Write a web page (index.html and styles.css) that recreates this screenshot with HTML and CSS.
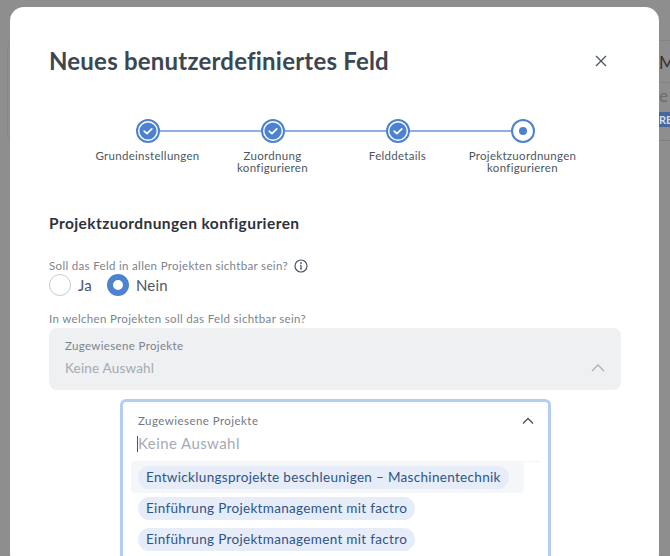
FILE: index.html
```html
<!DOCTYPE html>
<html lang="de">
<head>
<meta charset="utf-8">
<title>Neues benutzerdefiniertes Feld</title>
<link rel="stylesheet" href="styles.css">
</head>
<body>
<div class="page-behind">
  <div class="behind-card-left"></div>
  <div class="behind-right">
    <div class="behind-row behind-m">M</div>
    <div class="behind-row behind-e">e<span class="behind-tag">RE</span></div>
  </div>
</div>
<div class="modal">
  <header class="modal-head">
    <h1 class="modal-title">Neues benutzerdefiniertes Feld</h1>
    <svg class="close" viewBox="0 0 12 12" width="12" height="12"><path d="M1 1l10 10M11 1L1 11"/></svg>
  </header>
  <ol class="stepper">
    <li class="step done">
      <span class="dot"><svg viewBox="0 0 24 24" width="24" height="24"><circle cx="12" cy="12" r="8.6"/><path d="M8.2 12.2l2.7 2.5 4.9-4.9"/></svg></span>
      <span class="step-label">Grundeinstellungen</span>
    </li>
    <li class="step done">
      <span class="dot"><svg viewBox="0 0 24 24" width="24" height="24"><circle cx="12" cy="12" r="8.6"/><path d="M8.2 12.2l2.7 2.5 4.9-4.9"/></svg></span>
      <span class="step-label">Zuordnung<br>konfigurieren</span>
    </li>
    <li class="step done">
      <span class="dot"><svg viewBox="0 0 24 24" width="24" height="24"><circle cx="12" cy="12" r="8.6"/><path d="M8.2 12.2l2.7 2.5 4.9-4.9"/></svg></span>
      <span class="step-label">Felddetails</span>
    </li>
    <li class="step current">
      <span class="dot"><span class="dot-inner"></span></span>
      <span class="step-label">Projektzuordnungen<br>konfigurieren</span>
    </li>
  </ol>
  <h2 class="section-title">Projektzuordnungen konfigurieren</h2>
  <div class="question">
    <span>Soll das Feld in allen Projekten sichtbar sein?</span>
    <svg class="info" viewBox="0 0 14 14" width="14" height="14"><circle cx="7" cy="7" r="6"/><path d="M7 6.3v3.6M6 10h2M6.1 6.3H7"/><circle class="info-dot" cx="7" cy="4" r=".9"/></svg>
  </div>
  <div class="radios">
    <label class="radio"><span class="radio-off"></span>Ja</label>
    <label class="radio"><span class="radio-on"></span>Nein</label>
  </div>
  <div class="question second">In welchen Projekten soll das Feld sichtbar sein?</div>
  <div class="select-disabled">
    <div class="sel-label">Zugewiesene Projekte</div>
    <div class="sel-row">
      <span>Keine Auswahl</span>
      <svg class="chev" viewBox="0 0 14 8" width="14" height="8"><path d="M1 7l6-6 6 6"/></svg>
    </div>
  </div>
  <div class="dropdown">
    <div class="dd-head">
      <div class="dd-label-row">
        <span class="sel-label dark">Zugewiesene Projekte</span>
        <svg class="chev dark" viewBox="0 0 12 8" width="12" height="8"><path d="M1 6.5l5-5 5 5"/></svg>
      </div>
      <div class="dd-input"><span class="caret"></span>Keine Auswahl</div>
    </div>
    <ul class="options">
      <li class="option hover"><span class="pill">Entwicklungsprojekte beschleunigen – Maschinentechnik</span></li>
      <li class="option"><span class="pill">Einführung Projektmanagement mit factro</span></li>
      <li class="option"><span class="pill">Einführung Projektmanagement mit factro</span></li>
    </ul>
  </div>
</div>
</body>
</html>
```
FILE: styles.css
```css
* { box-sizing: border-box; }
html, body { margin: 0; padding: 0; height: 100%; overflow: hidden; }
body {
  width: 670px; height: 556px; position: relative; background: #8e8e8e;
  font-family: "Lato", "Noto Sans", sans-serif; color: #3c4651;
}
.page-behind { position: absolute; inset: 0; }
.behind-card-left { position: absolute; left: 7px; top: 43px; width: 10px; height: 96px; border: 1px solid #868686; border-radius: 6px; }
.behind-right { position: absolute; left: 659px; top: 40px; width: 11px; height: 101px; border-top: 1px solid #858585; border-bottom: 1px solid #7f7f7f; overflow: hidden; white-space: nowrap; }
.behind-row { font-size: 17px; color: #333; }
.behind-m { height: 42px; line-height: 44px; border-bottom: 1px solid #858585; }
.behind-e { height: 57px; line-height: 26px; color: #6c6c6c; position: relative; }
.behind-tag { position: absolute; left: 0; top: 29px; width: 11px; height: 15px; line-height: 15px; background: #47689f; color: #d4dbe6; font-size: 11px; font-weight: 700; }

.modal {
  position: absolute; left: 10px; top: 7px; width: 649px; height: 560px;
  background: #fff; border-radius: 14px; padding: 38px 39px 0;
  overflow: hidden;
}
.modal-head { display: flex; justify-content: space-between; align-items: center; height: 31px; padding-right: 13px; }
.modal-title { margin: 0; font-size: 24px; font-weight: 700; color: #3c4651; letter-spacing: .21px; }
.close { fill: none; stroke: #4b5560; stroke-width: 1.3; }

.stepper {
  list-style: none; margin: 43px 0 0 36px; padding: 0; display: grid;
  grid-template-columns: repeat(4, 125px); position: relative;
}
.step { display: flex; flex-direction: column; align-items: center; position: relative; }
.step:not(:last-child)::after {
  content: ""; position: absolute; left: 50%; top: 11px; width: 100%; height: 2px; background: #8fb0e3;
}
.dot {
  position: relative; z-index: 1; width: 24px; height: 24px; border-radius: 50%;
  border: 2px solid #4d82d1; background: #fff; display: flex; align-items: center; justify-content: center;
}
.dot svg { flex: none; }
.dot circle { fill: #4d82d1; }
.dot path { fill: none; stroke: #fff; stroke-width: 1.7; stroke-linecap: round; stroke-linejoin: round; }
.dot-inner { width: 8px; height: 8px; border-radius: 50%; background: #4d82d1; }
.step-label { margin-top: 7px; font-size: 11.5px; line-height: 12px; text-align: center; color: #4c5661; white-space: nowrap; letter-spacing: .3px; }

.section-title { margin: 39px 0 0; font-size: 15.5px; line-height: 20px; font-weight: 700; color: #2c333b; letter-spacing: .43px; }
.question { margin-top: 26px; font-size: 11.5px; line-height: 14px; color: #7b848e; display: flex; align-items: center; gap: 6px; letter-spacing: .33px; white-space: nowrap; }
.question.second { margin-top: 16px; }
.info { fill: none; stroke: #4b5560; stroke-width: 1.2; }
.info-dot { fill: #4b5560; stroke: none; }
.radios { display: flex; gap: 15px; margin-top: 1px; }
.radio { display: flex; align-items: center; gap: 7px; font-size: 15px; line-height: 22px; color: #4c5661; letter-spacing: .2px; }
.radio-off { width: 22px; height: 22px; border-radius: 50%; border: 1px solid #c8cdd2; background: #fff; }
.radio-on { width: 22px; height: 22px; border-radius: 50%; border: 6px solid #4d82d1; background: #fff; }

.select-disabled { margin-top: 2px; height: 62px; width: 572px; background: #eef0f2; border-radius: 8px; padding: 11px 16px 0 16px; }
.sel-label { font-size: 11.5px; line-height: 14px; color: #7b848e; letter-spacing: .35px; }
.sel-label.dark { color: #6f7882; letter-spacing: .45px; }
.sel-row { display: flex; justify-content: space-between; align-items: center; margin-top: 7px; font-size: 13.5px; line-height: 16px; color: #a4abb3; letter-spacing: .18px; }
.chev { fill: none; stroke: #aab0b6; stroke-width: 1.3; }
.chev.dark { stroke: #4b5560; stroke-width: 1.4; }

.dropdown {
  margin: 9px 0 0 71px; width: 431px; height: 300px; border: 3px solid #b3cdf3;
  border-bottom: 0; border-radius: 6px 6px 0 0; background: #fff; padding: 0 0 0 8px;
}
.dd-head { padding: 12px 6px 0 6px; height: 60px; border-bottom: 1px solid #f4f5f7; margin-right: 8px; }
.dd-label-row { display: flex; justify-content: space-between; align-items: center; height: 14px; padding-left: 1px; }
.dd-input { position: relative; margin-top: 6px; font-size: 15px; line-height: 18px; color: #a4abb3; letter-spacing: .42px; }
.caret { display: inline-block; width: 1px; height: 16px; background: #4b5560; vertical-align: -3px; }
.options { list-style: none; margin: 0; padding: 0; width: 393px; }
.option { height: 31px; padding: 4px 7px 0; }
.option.hover { background: #f4f6f8; border-radius: 4px; }
.pill { display: inline-block; height: 23px; line-height: 23px; border-radius: 12px; background: #e6edf8; color: #2e5488; font-size: 13.5px; padding: 0 8px; letter-spacing: .32px; white-space: nowrap; }
```
